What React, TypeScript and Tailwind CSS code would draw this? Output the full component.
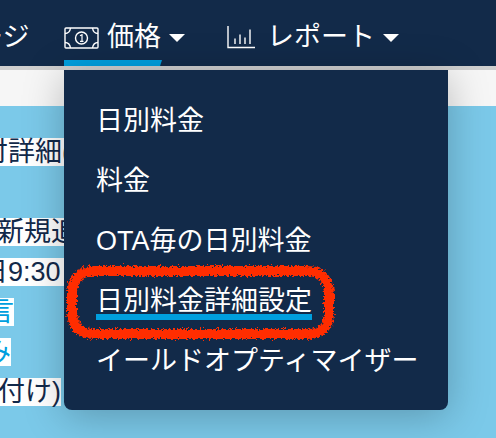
const font = '[font-family:"Liberation_Sans","Noto_Sans_CJK_JP",sans-serif]';

function Caret() {
  return <span className="block h-0 w-0 border-x-[8px] border-t-[8px] border-x-transparent border-t-white" />;
}

function MoneyIcon() {
  return (
    <svg width="35" height="22" viewBox="0 0 35 22" fill="none" stroke="white" strokeWidth="1.4">
      <rect x="1" y="1" width="33" height="20" rx="1" />
      <path d="M1 6.5c3 0 5-2 5.500-5.500M34 6.500c-3 0-5-2-5.500-5.500M1 15.500c3 0 5 2 5.500 5.500M34 15.500c-3 0-5 2-5.500 5.500" />
      <circle cx="17.500" cy="11" r="6" />
      <path d="M16 8.800l2-1v6.500M16 14.400h3.500" strokeWidth="1.200" />
    </svg>
  );
}

function ChartIcon() {
  return (
    <svg width="28" height="23" viewBox="0 0 28 23" fill="none" stroke="white" strokeWidth="1.400">
      <path d="M1 0v21.500h27" />
      <path d="M8 12.500v5.500M13 8.500v9.500M18 11.500v6.500M23 3.500v14.500" />
    </svg>
  );
}

const rows: [string, string, string, string][] = [
  ["ml-[-19px]", "text-[#12294a]", "付詳細(", ""],
  ["", "", "", ""],
  ["ml-[-3px]", "text-[#12294a]", "新規追加の設定", ""],
  ["ml-[-19px]", "text-[#12294a]", "日9:30まで", ""],
  ["ml-[-13px]", "text-[#009fde]", "言", ""],
  ["ml-[-16px]", "text-[#009fde]", "み", ""],
  ["ml-[-2px]", "text-[#12294a]", "付け)", "あ"],
];

const items = ["日別料金", "料金", "OTA毎の日別料金", "日別料金詳細設定", "イールドオプティマイザー"];

export default function App() {
  return (
    <div className={`relative h-[438px] w-[496px] overflow-hidden bg-[#7bc9e9] ${font}`}>
      <header className="flex h-[66px] items-center bg-[#122a49] text-[27px] leading-none text-white">
        <span className="ml-[-24px] w-[88px] whitespace-nowrap pt-[8px]">ージ</span>
        <div className="relative flex h-full items-center pt-[9px]">
          <MoneyIcon />
          <span className="ml-[8px]">価格</span>
          <span className="ml-[8px]"><Caret /></span>
          <span className="absolute bottom-0 left-0 h-[6px] w-[98px] bg-[#009fde] [clip-path:polygon(0_0,100%_0,98%_100%,0_100%)]" />
        </div>
        <div className="ml-[42px] flex h-full items-center pt-[9px]">
          <ChartIcon />
          <span className="ml-[12px]">レポート</span>
          <span className="ml-[8px]"><Caret /></span>
        </div>
      </header>
      <div className="h-[4px] bg-[#cfcfcf]" />
      <div className="h-[36px] bg-[#f6f6f6]" />
      <div className="pt-[32px] text-[27px] whitespace-nowrap">
        {rows.map(([ml, color, text, extra], i) => (
          <div key={i} className={`flex h-[40px] items-start ${ml}`}>
            {text && <span className={`h-[28px] bg-white leading-[28px] ${color}`}>{text}</span>}
            {extra && <span className="h-[28px] leading-[28px] text-[#009fde]">{extra}</span>}
          </div>
        ))}
      </div>

      <div className="absolute left-[64px] top-[70px] h-[340px] w-[384px] rounded-b-[8px] bg-[#122a49] pt-[21px] pl-[32px] text-[27px] leading-[60px] text-white shadow-[0_6px_40px_rgba(0,0,0,0.25)]">
        {items.map((t, i) => (
          <div key={t} className="flex h-[60px] items-start whitespace-nowrap">
            <span className={i === 3 ? "h-[49px] border-b-[6px] border-[#009fde]" : ""}>{t}</span>
          </div>
        ))}
      </div>

      <svg className="absolute left-[60px] top-[258px]" width="290" height="90" viewBox="0 0 290 90" fill="none">
        <defs>
          <filter id="rough" x="-5%" y="-20%" width="110%" height="140%" colorInterpolationFilters="sRGB">
            <feTurbulence type="fractalNoise" baseFrequency="0.45" numOctaves="3" seed="4" />
            <feDisplacementMap in="SourceGraphic" scale="7" xChannelSelector="R" yChannelSelector="G" />
          </filter>
        </defs>
        <path
          d="M34 13 H247 C264 13 269 24 269 36 V54 C269 69 262 76 247 76 H34 C19 76 12 68 12 54 V36 C12 22 19 13 34 13 Z"
          stroke="#ff2d00"
          strokeWidth="10"
          filter="url(#rough)"
        />
      </svg>
    </div>
  );
}
